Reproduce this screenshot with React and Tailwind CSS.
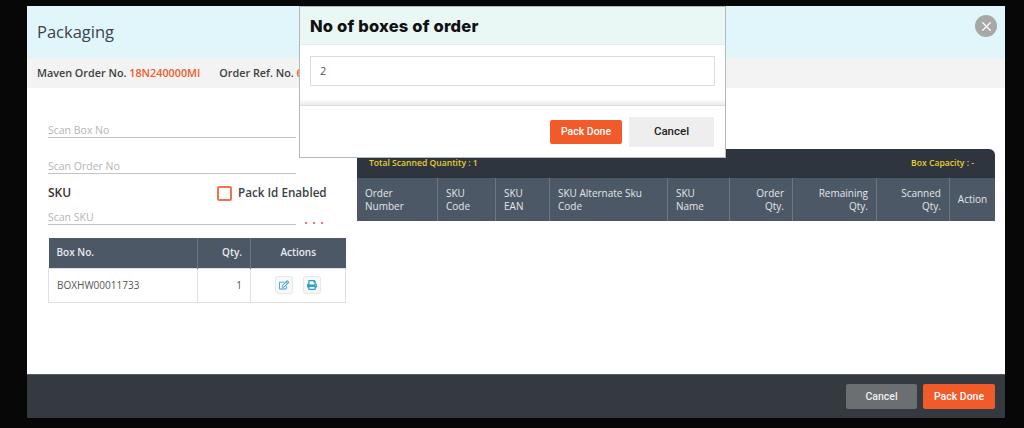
import { FaRegEdit, FaPrint } from 'react-icons/fa'
import { X } from 'lucide-react'

const orderColumns = [
  { label: ['Order', 'Number'], width: 'w-[81px]' },
  { label: ['SKU', 'Code'], width: 'w-[58px]' },
  { label: ['SKU', 'EAN'], width: 'w-[54px]' },
  { label: ['SKU Alternate Sku', 'Code'], width: 'w-[118px]' },
  { label: ['SKU', 'Name'], width: 'w-[62px]' },
  { label: ['Order', 'Qty.'], width: 'w-[63px]', right: true },
  { label: ['Remaining', 'Qty.'], width: 'w-[84px]', right: true },
  { label: ['Scanned', 'Qty.'], width: 'w-[73px]', right: true },
  { label: ['Action'], width: 'w-[45px]', center: true },
]

function ScanField({ label, className = '' }) {
  return (
    <div className={`flex h-[21px] w-[248px] items-end border-b border-[#c4c4c4] text-[10.5px] leading-[13px] text-[#b5b5b5] ${className}`}>
      {label}
    </div>
  )
}

function IconButton({ children }) {
  return (
    <span className="flex h-[18px] w-[18px] items-center justify-center rounded-[3px] border border-[#e8e8e8] bg-[#f8f8f8] text-[10px] text-[#2a9fd0]">
      {children}
    </span>
  )
}

function BoxTable() {
  return (
    <table className="mt-[13px] w-[298px] table-fixed border-collapse text-[10px]">
      <thead>
        <tr className="h-[30px] bg-[#4c5866] text-[#e8ebee]">
          <th className="w-[149px] border-r border-[#6d7784] pl-[8px] text-left font-semibold">Box No.</th>
          <th className="w-[53px] border-r border-[#6d7784] pr-[8px] text-right font-semibold">Qty.</th>
          <th className="font-semibold">Actions</th>
        </tr>
      </thead>
      <tbody>
        <tr className="h-[34px] border border-[#e0e0e0] text-[#555]">
          <td className="border-r border-[#e0e0e0] pl-[8px]">BOXHW00011733</td>
          <td className="border-r border-[#e0e0e0] pr-[8px] text-right">1</td>
          <td>
            <div className="flex justify-center gap-[10px]">
              <IconButton><FaRegEdit /></IconButton>
              <IconButton><FaPrint /></IconButton>
            </div>
          </td>
        </tr>
      </tbody>
    </table>
  )
}

function OrderTable() {
  return (
    <div className="w-[638px]">
      <div className="flex h-[29px] items-center justify-between rounded-tr-[6px] bg-[#2f353e] pl-[12px] pr-[21px] text-[8.6px] font-semibold text-[#e6cf2e]">
        <span>Total Scanned Quantity : 1</span>
        <span>Box Capacity : -</span>
      </div>
      <div className="flex h-[43px] bg-[#4c5866] text-[10px] font-medium leading-[13px] text-[#e3e6ea]">
        {orderColumns.map((col) => (
          <div
            key={col.label.join(' ')}
            className={`flex flex-col justify-center border-r border-[#6d7784] px-[8px] last:border-r-0 ${col.width} ${col.right ? 'items-end' : ''} ${col.center ? 'items-center !px-0' : ''}`}
          >
            {col.label.map((line) => (
              <span key={line} className="whitespace-nowrap">{line}</span>
            ))}
          </div>
        ))}
      </div>
    </div>
  )
}

function BoxCountDialog() {
  return (
    <div className="absolute left-[299px] top-[6px] flex h-[152px] w-[427px] flex-col border border-[#b4b8ba] bg-white">
      <div className="flex h-[38px] shrink-0 items-center border-b border-[#e3eeee] bg-[#e9f7f5] pl-[10px] pt-[1px] font-['Inter',sans-serif] text-[16.5px] font-extrabold tracking-[0.2px] text-[#111]">
        No of boxes of order
      </div>
      <div className="h-[60px] shrink-0 bg-gradient-to-b from-white from-90% to-[#ececec] px-[10px] pt-[11px]">
        <div className="flex h-[30px] items-center border border-[#dcdcdc] bg-white pl-[9px] text-[11px] text-[#555]">2</div>
      </div>
      <div className="flex flex-1 items-center justify-end gap-[7px] border-t border-[#dedede] pr-[11px]">
        <button className="h-[24px] w-[72px] rounded-[2px] bg-[#f15a29] font-['Roboto',sans-serif] text-[10.5px] font-medium text-[#fff]">Pack Done</button>
        <button className="h-[30px] w-[85px] bg-[#eeeeee] font-['Roboto',sans-serif] text-[11.5px] font-medium text-[#222]">Cancel</button>
      </div>
    </div>
  )
}

export default function App() {
  return (
    <div className="relative h-[428px] w-[1024px] overflow-hidden bg-[#070707] pl-[27px] pt-[6px] font-['Open_Sans',sans-serif]">
      <div className="relative flex h-[412px] w-[978px] flex-col bg-white">
        <div className="flex h-[52px] shrink-0 items-center bg-[#e1f6fb] pl-[10px] text-[16.5px] text-[#3a444c]">
          Packaging
        </div>
        <div className="flex h-[30px] shrink-0 items-center gap-[19px] bg-[#f3f3f3] pl-[10px] text-[10.8px] font-semibold text-[#3c3f42]">
          <span>Maven Order No. <span className="text-[#f15a29]">18N240000MI</span></span>
          <span>Order Ref. No. <span className="text-[#f15a29]">6</span></span>
        </div>

        <div className="flex flex-1 pl-[21px]">
          <div className="w-[298px] pt-[29px]">
            <ScanField label="Scan Box No" />
            <ScanField label="Scan Order No" className="mt-[15px]" />
            <div className="mt-[10px] flex h-[18px] items-center text-[12px] font-semibold text-[#333]">
              <span className="w-[169px]">SKU</span>
              <span className="h-[15px] w-[15px] rounded-[2px] border-2 border-[#ef7350]" />
              <span className="ml-[6px] whitespace-nowrap text-[11.7px] text-[#3c3f42]">Pack Id Enabled</span>
            </div>
            <div className="mt-[2px] flex items-end">
              <ScanField label="Scan SKU" />
              <span className="mb-[1px] ml-[9px] flex gap-[6px]">
                <i className="h-[2px] w-[2px] rounded-full bg-[#e2492c]" />
                <i className="h-[2px] w-[2px] rounded-full bg-[#e2492c]" />
                <i className="h-[2px] w-[2px] rounded-full bg-[#e2492c]" />
              </span>
            </div>
            <BoxTable />
          </div>
          <div className="ml-[11px] pt-[61px]">
            <OrderTable />
          </div>
        </div>

        <div className="flex h-[44px] shrink-0 items-center justify-end gap-[6px] border-t border-[#555a5e] bg-[#343a3f] pr-[10px] font-['Roboto',sans-serif] text-[10.5px] font-medium">
          <button className="h-[25px] w-[71px] rounded-[2px] bg-[#6c6f71] text-[#eee]">Cancel</button>
          <button className="h-[25px] w-[72px] rounded-[2px] bg-[#f15a29] text-[#fff]">Pack Done</button>
        </div>

        <span className="absolute right-[8px] top-[9px] flex h-[22px] w-[22px] items-center justify-center rounded-full bg-[#a8a8a8] text-white">
          <X size={15} strokeWidth={2} />
        </span>
      </div>
      <BoxCountDialog />
    </div>
  )
}
